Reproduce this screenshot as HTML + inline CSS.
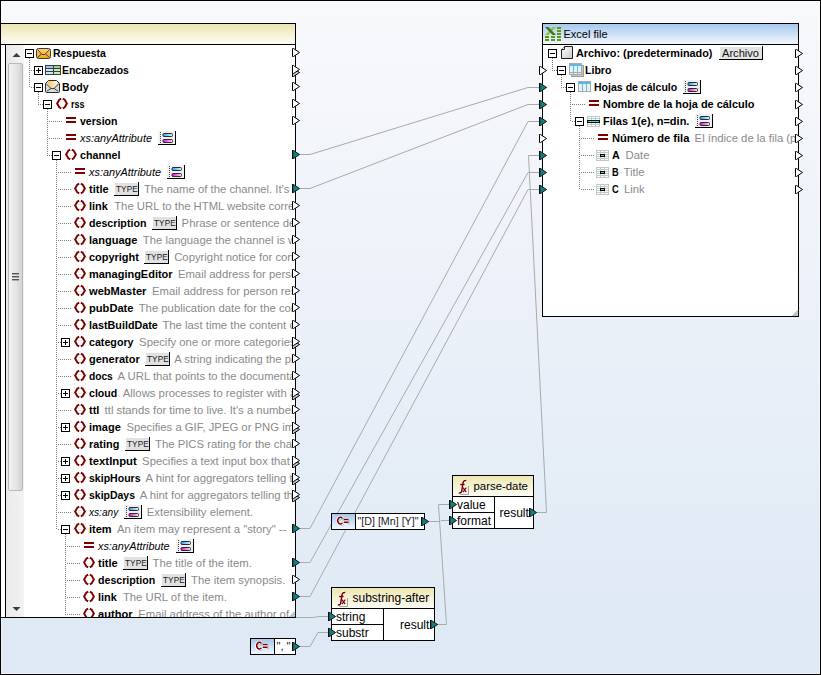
<!DOCTYPE html>
<html><head><meta charset="utf-8"><style>html,body{margin:0;padding:0;background:#fff;overflow:hidden}svg text{white-space:pre}</style></head>
<body>
<svg width="821" height="675" viewBox="0 0 821 675" font-family="Liberation Sans" style="display:block">
<defs>
<linearGradient id="gbg" x1="0" y1="0" x2="0" y2="1"><stop offset="0" stop-color="#f8f9fb"/><stop offset="0.45" stop-color="#ecf1f9"/><stop offset="1" stop-color="#dde8f4"/></linearGradient>
<linearGradient id="gyel" x1="0" y1="0" x2="0" y2="1"><stop offset="0" stop-color="#ece6b0"/><stop offset="1" stop-color="#fdfcf4"/></linearGradient>
<linearGradient id="gblue" x1="0" y1="0" x2="0" y2="1"><stop offset="0" stop-color="#a7c8ef"/><stop offset="1" stop-color="#f3f7fc"/></linearGradient>
<linearGradient id="gcbtn" x1="0" y1="0" x2="0" y2="1"><stop offset="0" stop-color="#a6c6ee"/><stop offset="1" stop-color="#f2f7fd"/></linearGradient>
<linearGradient id="gcyan" x1="0" y1="0" x2="1" y2="0"><stop offset="0" stop-color="#1aa0ff"/><stop offset="1" stop-color="#e8f6ff"/></linearGradient>
<linearGradient id="gmag" x1="0" y1="0" x2="1" y2="0"><stop offset="0" stop-color="#e000e0"/><stop offset="1" stop-color="#fbe6fb"/></linearGradient>
<linearGradient id="gorange" x1="0" y1="0" x2="0" y2="1"><stop offset="0" stop-color="#ffd07a"/><stop offset="1" stop-color="#f6a412"/></linearGradient>
<linearGradient id="gorange2" x1="0" y1="0" x2="0" y2="1"><stop offset="0" stop-color="#fbd28e"/><stop offset="1" stop-color="#fff4e0"/></linearGradient>
<linearGradient id="gscroll" x1="0" y1="0" x2="1" y2="0"><stop offset="0" stop-color="#f4f4f4"/><stop offset="0.5" stop-color="#e6e6e6"/><stop offset="1" stop-color="#d2d2d2"/></linearGradient>
<linearGradient id="gtrack" x1="0" y1="0" x2="1" y2="0"><stop offset="0" stop-color="#e9e9e9"/><stop offset="1" stop-color="#f3f3f3"/></linearGradient>
<linearGradient id="gfile" x1="0" y1="0" x2="1" y2="1"><stop offset="0" stop-color="#ffffff"/><stop offset="1" stop-color="#c9c9c9"/></linearGradient>
<linearGradient id="gorange3" x1="0" y1="0" x2="1" y2="0"><stop offset="0" stop-color="#ffc35a"/><stop offset="1" stop-color="#fff6dc"/></linearGradient>
<clipPath id="clipL"><rect x="6" y="45" width="286" height="572"/></clipPath>
</defs>
<rect x="0" y="0" width="821" height="675" fill="url(#gbg)"/>
<rect x="1" y="1" width="819" height="673" fill="none" stroke="#ffffff" stroke-width="1" opacity="0.8"/>
<rect x="0.5" y="0.5" width="820" height="674" fill="none" stroke="#000" stroke-width="1"/>
<path d="M300,154.5 L310,154.5 L528,87.5 L540,87.5" fill="none" stroke="#aaaaaa" stroke-width="1"/>
<path d="M300,188.5 L310,188.5 L528,104.5 L540,104.5" fill="none" stroke="#aaaaaa" stroke-width="1"/>
<path d="M300,528.5 L310,528.5 L528,121.5 L540,121.5" fill="none" stroke="#aaaaaa" stroke-width="1"/>
<path d="M300,562.5 L310,562.5 L528,172.5 L540,172.5" fill="none" stroke="#aaaaaa" stroke-width="1"/>
<path d="M300,596.5 L310,596.5 L528,189.5 L540,189.5" fill="none" stroke="#aaaaaa" stroke-width="1"/>
<path d="M534,512.5 L546.5,512.5 L528.5,155.5 L540,155.5" fill="none" stroke="#aaaaaa" stroke-width="1"/>
<path d="M435,624.5 L446.5,624.5 L438.5,504.5 L452,504.5" fill="none" stroke="#aaaaaa" stroke-width="1"/>
<path d="M428,521.5 L440,521.5 L441,520.5 L452,520.5" fill="none" stroke="#aaaaaa" stroke-width="1"/>
<path d="M299,646.5 L310,646.5 L318,632.5 L332,632.5" fill="none" stroke="#aaaaaa" stroke-width="1"/>
<path d="M296,617.5 L312,617.5 L320,616.5 L332,616.5" fill="none" stroke="#aaaaaa" stroke-width="1"/>
<rect x="1" y="23" width="295" height="595" fill="#000"/>
<rect x="1" y="24" width="294" height="20" fill="url(#gyel)"/>
<rect x="1" y="45" width="294" height="572" fill="#fff"/>
<rect x="5" y="45" width="1" height="572" fill="#000"/>
<rect x="6" y="45" width="18" height="572" fill="url(#gtrack)"/>
<path d="M12.5,57 L16.5,53 L20.5,57 Z" fill="#3a3a3a"/>
<path d="M12.5,607 L16.5,611 L20.5,607 Z" fill="#3a3a3a"/>
<rect x="8.5" y="63.5" width="14" height="427" rx="1.5" fill="url(#gscroll)" stroke="#b9b9b9"/>
<rect x="12" y="273" width="7" height="1.4" fill="#555"/>
<rect x="12" y="276" width="7" height="1.4" fill="#555"/>
<rect x="12" y="279" width="7" height="1.4" fill="#555"/>
<g clip-path="url(#clipL)">
<path d="M29,58h1v1h-1zM29,60h1v1h-1zM29,62h1v1h-1zM29,64h1v1h-1zM29,66h1v1h-1zM29,68h1v1h-1zM29,70h1v1h-1zM29,72h1v1h-1zM29,74h1v1h-1zM29,76h1v1h-1zM29,78h1v1h-1zM29,80h1v1h-1zM29,82h1v1h-1zM29,84h1v1h-1zM29,86h1v1h-1zM31,70h1v1h-1zM33,70h1v1h-1zM31,87h1v1h-1zM33,87h1v1h-1z" fill="#7c7c7c"/>
<path d="M38,92h1v1h-1zM38,94h1v1h-1zM38,96h1v1h-1zM38,98h1v1h-1zM38,100h1v1h-1zM38,102h1v1h-1zM38,104h1v1h-1zM40,104h1v1h-1zM42,104h1v1h-1z" fill="#7c7c7c"/>
<path d="M47,109h1v1h-1zM47,111h1v1h-1zM47,113h1v1h-1zM47,115h1v1h-1zM47,117h1v1h-1zM47,119h1v1h-1zM47,121h1v1h-1zM47,123h1v1h-1zM47,125h1v1h-1zM47,127h1v1h-1zM47,129h1v1h-1zM47,131h1v1h-1zM47,133h1v1h-1zM47,135h1v1h-1zM47,137h1v1h-1zM47,139h1v1h-1zM47,141h1v1h-1zM47,143h1v1h-1zM47,145h1v1h-1zM47,147h1v1h-1zM47,149h1v1h-1zM47,151h1v1h-1zM47,153h1v1h-1zM47,155h1v1h-1zM49,121h1v1h-1zM51,121h1v1h-1zM53,121h1v1h-1zM55,121h1v1h-1zM57,121h1v1h-1zM59,121h1v1h-1zM61,121h1v1h-1zM49,138h1v1h-1zM51,138h1v1h-1zM53,138h1v1h-1zM55,138h1v1h-1zM57,138h1v1h-1zM59,138h1v1h-1zM61,138h1v1h-1zM49,155h1v1h-1zM51,155h1v1h-1z" fill="#7c7c7c"/>
<path d="M56,160h1v1h-1zM56,162h1v1h-1zM56,164h1v1h-1zM56,166h1v1h-1zM56,168h1v1h-1zM56,170h1v1h-1zM56,172h1v1h-1zM56,174h1v1h-1zM56,176h1v1h-1zM56,178h1v1h-1zM56,180h1v1h-1zM56,182h1v1h-1zM56,184h1v1h-1zM56,186h1v1h-1zM56,188h1v1h-1zM56,190h1v1h-1zM56,192h1v1h-1zM56,194h1v1h-1zM56,196h1v1h-1zM56,198h1v1h-1zM56,200h1v1h-1zM56,202h1v1h-1zM56,204h1v1h-1zM56,206h1v1h-1zM56,208h1v1h-1zM56,210h1v1h-1zM56,212h1v1h-1zM56,214h1v1h-1zM56,216h1v1h-1zM56,218h1v1h-1zM56,220h1v1h-1zM56,222h1v1h-1zM56,224h1v1h-1zM56,226h1v1h-1zM56,228h1v1h-1zM56,230h1v1h-1zM56,232h1v1h-1zM56,234h1v1h-1zM56,236h1v1h-1zM56,238h1v1h-1zM56,240h1v1h-1zM56,242h1v1h-1zM56,244h1v1h-1zM56,246h1v1h-1zM56,248h1v1h-1zM56,250h1v1h-1zM56,252h1v1h-1zM56,254h1v1h-1zM56,256h1v1h-1zM56,258h1v1h-1zM56,260h1v1h-1zM56,262h1v1h-1zM56,264h1v1h-1zM56,266h1v1h-1zM56,268h1v1h-1zM56,270h1v1h-1zM56,272h1v1h-1zM56,274h1v1h-1zM56,276h1v1h-1zM56,278h1v1h-1zM56,280h1v1h-1zM56,282h1v1h-1zM56,284h1v1h-1zM56,286h1v1h-1zM56,288h1v1h-1zM56,290h1v1h-1zM56,292h1v1h-1zM56,294h1v1h-1zM56,296h1v1h-1zM56,298h1v1h-1zM56,300h1v1h-1zM56,302h1v1h-1zM56,304h1v1h-1zM56,306h1v1h-1zM56,308h1v1h-1zM56,310h1v1h-1zM56,312h1v1h-1zM56,314h1v1h-1zM56,316h1v1h-1zM56,318h1v1h-1zM56,320h1v1h-1zM56,322h1v1h-1zM56,324h1v1h-1zM56,326h1v1h-1zM56,328h1v1h-1zM56,330h1v1h-1zM56,332h1v1h-1zM56,334h1v1h-1zM56,336h1v1h-1zM56,338h1v1h-1zM56,340h1v1h-1zM56,342h1v1h-1zM56,344h1v1h-1zM56,346h1v1h-1zM56,348h1v1h-1zM56,350h1v1h-1zM56,352h1v1h-1zM56,354h1v1h-1zM56,356h1v1h-1zM56,358h1v1h-1zM56,360h1v1h-1zM56,362h1v1h-1zM56,364h1v1h-1zM56,366h1v1h-1zM56,368h1v1h-1zM56,370h1v1h-1zM56,372h1v1h-1zM56,374h1v1h-1zM56,376h1v1h-1zM56,378h1v1h-1zM56,380h1v1h-1zM56,382h1v1h-1zM56,384h1v1h-1zM56,386h1v1h-1zM56,388h1v1h-1zM56,390h1v1h-1zM56,392h1v1h-1zM56,394h1v1h-1zM56,396h1v1h-1zM56,398h1v1h-1zM56,400h1v1h-1zM56,402h1v1h-1zM56,404h1v1h-1zM56,406h1v1h-1zM56,408h1v1h-1zM56,410h1v1h-1zM56,412h1v1h-1zM56,414h1v1h-1zM56,416h1v1h-1zM56,418h1v1h-1zM56,420h1v1h-1zM56,422h1v1h-1zM56,424h1v1h-1zM56,426h1v1h-1zM56,428h1v1h-1zM56,430h1v1h-1zM56,432h1v1h-1zM56,434h1v1h-1zM56,436h1v1h-1zM56,438h1v1h-1zM56,440h1v1h-1zM56,442h1v1h-1zM56,444h1v1h-1zM56,446h1v1h-1zM56,448h1v1h-1zM56,450h1v1h-1zM56,452h1v1h-1zM56,454h1v1h-1zM56,456h1v1h-1zM56,458h1v1h-1zM56,460h1v1h-1zM56,462h1v1h-1zM56,464h1v1h-1zM56,466h1v1h-1zM56,468h1v1h-1zM56,470h1v1h-1zM56,472h1v1h-1zM56,474h1v1h-1zM56,476h1v1h-1zM56,478h1v1h-1zM56,480h1v1h-1zM56,482h1v1h-1zM56,484h1v1h-1zM56,486h1v1h-1zM56,488h1v1h-1zM56,490h1v1h-1zM56,492h1v1h-1zM56,494h1v1h-1zM56,496h1v1h-1zM56,498h1v1h-1zM56,500h1v1h-1zM56,502h1v1h-1zM56,504h1v1h-1zM56,506h1v1h-1zM56,508h1v1h-1zM56,510h1v1h-1zM56,512h1v1h-1zM56,514h1v1h-1zM56,516h1v1h-1zM56,518h1v1h-1zM56,520h1v1h-1zM56,522h1v1h-1zM56,524h1v1h-1zM56,526h1v1h-1zM56,528h1v1h-1zM58,172h1v1h-1zM60,172h1v1h-1zM62,172h1v1h-1zM64,172h1v1h-1zM66,172h1v1h-1zM68,172h1v1h-1zM70,172h1v1h-1zM58,189h1v1h-1zM60,189h1v1h-1zM62,189h1v1h-1zM64,189h1v1h-1zM66,189h1v1h-1zM68,189h1v1h-1zM70,189h1v1h-1zM58,206h1v1h-1zM60,206h1v1h-1zM62,206h1v1h-1zM64,206h1v1h-1zM66,206h1v1h-1zM68,206h1v1h-1zM70,206h1v1h-1zM58,223h1v1h-1zM60,223h1v1h-1zM62,223h1v1h-1zM64,223h1v1h-1zM66,223h1v1h-1zM68,223h1v1h-1zM70,223h1v1h-1zM58,240h1v1h-1zM60,240h1v1h-1zM62,240h1v1h-1zM64,240h1v1h-1zM66,240h1v1h-1zM68,240h1v1h-1zM70,240h1v1h-1zM58,257h1v1h-1zM60,257h1v1h-1zM62,257h1v1h-1zM64,257h1v1h-1zM66,257h1v1h-1zM68,257h1v1h-1zM70,257h1v1h-1zM58,274h1v1h-1zM60,274h1v1h-1zM62,274h1v1h-1zM64,274h1v1h-1zM66,274h1v1h-1zM68,274h1v1h-1zM70,274h1v1h-1zM58,291h1v1h-1zM60,291h1v1h-1zM62,291h1v1h-1zM64,291h1v1h-1zM66,291h1v1h-1zM68,291h1v1h-1zM70,291h1v1h-1zM58,308h1v1h-1zM60,308h1v1h-1zM62,308h1v1h-1zM64,308h1v1h-1zM66,308h1v1h-1zM68,308h1v1h-1zM70,308h1v1h-1zM58,325h1v1h-1zM60,325h1v1h-1zM62,325h1v1h-1zM64,325h1v1h-1zM66,325h1v1h-1zM68,325h1v1h-1zM70,325h1v1h-1zM58,342h1v1h-1zM60,342h1v1h-1zM58,359h1v1h-1zM60,359h1v1h-1zM62,359h1v1h-1zM64,359h1v1h-1zM66,359h1v1h-1zM68,359h1v1h-1zM70,359h1v1h-1zM58,376h1v1h-1zM60,376h1v1h-1zM62,376h1v1h-1zM64,376h1v1h-1zM66,376h1v1h-1zM68,376h1v1h-1zM70,376h1v1h-1zM58,393h1v1h-1zM60,393h1v1h-1zM58,410h1v1h-1zM60,410h1v1h-1zM62,410h1v1h-1zM64,410h1v1h-1zM66,410h1v1h-1zM68,410h1v1h-1zM70,410h1v1h-1zM58,427h1v1h-1zM60,427h1v1h-1zM58,444h1v1h-1zM60,444h1v1h-1zM62,444h1v1h-1zM64,444h1v1h-1zM66,444h1v1h-1zM68,444h1v1h-1zM70,444h1v1h-1zM58,461h1v1h-1zM60,461h1v1h-1zM58,478h1v1h-1zM60,478h1v1h-1zM58,495h1v1h-1zM60,495h1v1h-1zM58,512h1v1h-1zM60,512h1v1h-1zM62,512h1v1h-1zM64,512h1v1h-1zM66,512h1v1h-1zM68,512h1v1h-1zM70,512h1v1h-1zM58,529h1v1h-1zM60,529h1v1h-1z" fill="#7c7c7c"/>
<path d="M65,534h1v1h-1zM65,536h1v1h-1zM65,538h1v1h-1zM65,540h1v1h-1zM65,542h1v1h-1zM65,544h1v1h-1zM65,546h1v1h-1zM65,548h1v1h-1zM65,550h1v1h-1zM65,552h1v1h-1zM65,554h1v1h-1zM65,556h1v1h-1zM65,558h1v1h-1zM65,560h1v1h-1zM65,562h1v1h-1zM65,564h1v1h-1zM65,566h1v1h-1zM65,568h1v1h-1zM65,570h1v1h-1zM65,572h1v1h-1zM65,574h1v1h-1zM65,576h1v1h-1zM65,578h1v1h-1zM65,580h1v1h-1zM65,582h1v1h-1zM65,584h1v1h-1zM65,586h1v1h-1zM65,588h1v1h-1zM65,590h1v1h-1zM65,592h1v1h-1zM65,594h1v1h-1zM65,596h1v1h-1zM65,598h1v1h-1zM65,600h1v1h-1zM65,602h1v1h-1zM65,604h1v1h-1zM65,606h1v1h-1zM65,608h1v1h-1zM65,610h1v1h-1zM65,612h1v1h-1zM65,614h1v1h-1zM67,546h1v1h-1zM69,546h1v1h-1zM71,546h1v1h-1zM73,546h1v1h-1zM75,546h1v1h-1zM77,546h1v1h-1zM79,546h1v1h-1zM67,563h1v1h-1zM69,563h1v1h-1zM71,563h1v1h-1zM73,563h1v1h-1zM75,563h1v1h-1zM77,563h1v1h-1zM79,563h1v1h-1zM67,580h1v1h-1zM69,580h1v1h-1zM71,580h1v1h-1zM73,580h1v1h-1zM75,580h1v1h-1zM77,580h1v1h-1zM79,580h1v1h-1zM67,597h1v1h-1zM69,597h1v1h-1zM71,597h1v1h-1zM73,597h1v1h-1zM75,597h1v1h-1zM77,597h1v1h-1zM79,597h1v1h-1zM67,614h1v1h-1zM69,614h1v1h-1zM71,614h1v1h-1zM73,614h1v1h-1zM75,614h1v1h-1zM77,614h1v1h-1zM79,614h1v1h-1z" fill="#7c7c7c"/>
<rect x="25.5" y="49.5" width="8" height="8" fill="#fff" stroke="#000" stroke-width="1"/>
<rect x="27" y="53" width="5" height="1" fill="#000"/>
<rect x="36.5" y="48.5" width="14" height="10" rx="2" fill="url(#gorange)" stroke="#3c3c3c"/>
<path d="M37.5,49.5 L42,54.5 L45,54.5 L49.5,49.5 M37.5,57.5 L41.5,54 M49.5,57.5 L45.5,54" fill="none" stroke="#333" stroke-width="0.9"/>
<text x="53" y="57" font-size="11" font-weight="bold" textLength="52.9" lengthAdjust="spacingAndGlyphs">Respuesta</text>
<rect x="34.5" y="66.5" width="8" height="8" fill="#fff" stroke="#000" stroke-width="1"/>
<rect x="36" y="70" width="5" height="1" fill="#000"/>
<rect x="38" y="68" width="1" height="5" fill="#000"/>
<rect x="45" y="65" width="16" height="10" fill="#3c3c3c"/>
<rect x="46" y="66" width="7" height="2" fill="#9ec5f0"/>
<rect x="54" y="66" width="6" height="2" fill="#93d293"/>
<rect x="46" y="69" width="7" height="2" fill="#cde6fc"/>
<rect x="54" y="69" width="6" height="2" fill="#c3edbb"/>
<rect x="46" y="72" width="7" height="2" fill="#cde6fc"/>
<rect x="54" y="72" width="6" height="2" fill="#c3edbb"/>
<text x="62" y="74" font-size="11" font-weight="bold" textLength="66.9" lengthAdjust="spacingAndGlyphs">Encabezados</text>
<rect x="34.5" y="83.5" width="8" height="8" fill="#fff" stroke="#000" stroke-width="1"/>
<rect x="36" y="87" width="5" height="1" fill="#000"/>
<path d="M48.5,80.5 H56.5 L59.5,83.5 V91.5 Q59.5,92.5 58.5,92.5 H46.5 Q45.5,92.5 45.5,91.5 V83.5 Z" fill="#dadada" stroke="#2a2a2a"/>
<path d="M48,81 H57 V83.5 L53.8,87.8 H51.2 L48,83.5 Z" fill="url(#gorange3)"/>
<path d="M46.2,83.8 L51,88.5 H54 L58.8,83.8 M46.8,91.2 L51,88.5 M58.2,91.2 L54,88.5" fill="none" stroke="#333" stroke-width="0.9"/>
<text x="62" y="91" font-size="11" font-weight="bold" textLength="26.6" lengthAdjust="spacingAndGlyphs">Body</text>
<rect x="43.5" y="100.5" width="8" height="8" fill="#fff" stroke="#000" stroke-width="1"/>
<rect x="45" y="104" width="5" height="1" fill="#000"/>
<path d="M61.2,98.7 L59.3,99.7 L57.1,103.5 L59.3,107.3 L61.2,108.3" fill="none" stroke="#7d0000" stroke-width="1.9"/>
<path d="M62.8,98.7 L64.7,99.7 L66.9,103.5 L64.7,107.3 L62.8,108.3" fill="none" stroke="#7d0000" stroke-width="1.9"/>
<text x="71" y="108" font-size="11" font-weight="bold" textLength="13.6" lengthAdjust="spacingAndGlyphs">rss</text>
<rect x="66" y="117" width="10" height="2" fill="#7d0000"/>
<rect x="66" y="121" width="10" height="2" fill="#7d0000"/>
<text x="80" y="125" font-size="11" font-weight="bold" textLength="37.5" lengthAdjust="spacingAndGlyphs">version</text>
<rect x="66" y="134" width="10" height="2" fill="#7d0000"/>
<rect x="66" y="138" width="10" height="2" fill="#7d0000"/>
<text x="80" y="142" font-size="11" font-style="italic" textLength="72.0" lengthAdjust="spacingAndGlyphs">xs:anyAttribute</text>
<rect x="158" y="131" width="17" height="13" fill="#f0f0f0"/>
<rect x="158" y="144" width="18" height="1" fill="#000"/>
<rect x="175" y="131" width="1" height="14" fill="#000"/>
<line x1="160.5" y1="132" x2="160.5" y2="143" stroke="#444" stroke-dasharray="1 1"/>
<rect x="163" y="133.5" width="9.5" height="3" rx="1" fill="url(#gcyan)" stroke="#2a2a2a"/>
<rect x="163" y="139.5" width="9.5" height="3" rx="1" fill="url(#gmag)" stroke="#2a2a2a"/>
<rect x="52.5" y="151.5" width="8" height="8" fill="#fff" stroke="#000" stroke-width="1"/>
<rect x="54" y="155" width="5" height="1" fill="#000"/>
<path d="M70.2,149.7 L68.3,150.7 L66.1,154.5 L68.3,158.3 L70.2,159.3" fill="none" stroke="#7d0000" stroke-width="1.9"/>
<path d="M71.8,149.7 L73.7,150.7 L75.9,154.5 L73.7,158.3 L71.8,159.3" fill="none" stroke="#7d0000" stroke-width="1.9"/>
<text x="80" y="159" font-size="11" font-weight="bold" textLength="40.4" lengthAdjust="spacingAndGlyphs">channel</text>
<rect x="75" y="168" width="10" height="2" fill="#7d0000"/>
<rect x="75" y="172" width="10" height="2" fill="#7d0000"/>
<text x="89" y="176" font-size="11" font-style="italic" textLength="72.0" lengthAdjust="spacingAndGlyphs">xs:anyAttribute</text>
<rect x="167" y="165" width="17" height="13" fill="#f0f0f0"/>
<rect x="167" y="178" width="18" height="1" fill="#000"/>
<rect x="184" y="165" width="1" height="14" fill="#000"/>
<line x1="169.5" y1="166" x2="169.5" y2="177" stroke="#444" stroke-dasharray="1 1"/>
<rect x="172" y="167.5" width="9.5" height="3" rx="1" fill="url(#gcyan)" stroke="#2a2a2a"/>
<rect x="172" y="173.5" width="9.5" height="3" rx="1" fill="url(#gmag)" stroke="#2a2a2a"/>
<path d="M79.2,183.7 L77.3,184.7 L75.1,188.5 L77.3,192.3 L79.2,193.3" fill="none" stroke="#7d0000" stroke-width="1.9"/>
<path d="M80.8,183.7 L82.7,184.7 L84.9,188.5 L82.7,192.3 L80.8,193.3" fill="none" stroke="#7d0000" stroke-width="1.9"/>
<text x="89" y="193" font-size="11" font-weight="bold" textLength="19.6" lengthAdjust="spacingAndGlyphs">title</text>
<rect x="115" y="183" width="23" height="12" fill="#e1e1e1"/>
<rect x="114" y="195" width="25" height="1" fill="#000"/>
<rect x="138" y="182" width="1" height="14" fill="#000"/>
<text x="116" y="192" font-size="8.2" fill="#1a1a1a" letter-spacing="0.1">TYPE</text>
<text x="143.9" y="193" font-size="11" fill="#8a8a8a" textLength="261.8" lengthAdjust="spacingAndGlyphs">The name of the channel. It's a very long description</text>
<path d="M79.2,200.7 L77.3,201.7 L75.1,205.5 L77.3,209.3 L79.2,210.3" fill="none" stroke="#7d0000" stroke-width="1.9"/>
<path d="M80.8,200.7 L82.7,201.7 L84.9,205.5 L82.7,209.3 L80.8,210.3" fill="none" stroke="#7d0000" stroke-width="1.9"/>
<text x="89" y="210" font-size="11" font-weight="bold" textLength="18.9" lengthAdjust="spacingAndGlyphs">link</text>
<text x="114.19999999999999" y="210" font-size="11" fill="#8a8a8a" textLength="226.1" lengthAdjust="spacingAndGlyphs">The URL to the HTML website corresponding</text>
<path d="M79.2,217.7 L77.3,218.7 L75.1,222.5 L77.3,226.3 L79.2,227.3" fill="none" stroke="#7d0000" stroke-width="1.9"/>
<path d="M80.8,217.7 L82.7,218.7 L84.9,222.5 L82.7,226.3 L80.8,227.3" fill="none" stroke="#7d0000" stroke-width="1.9"/>
<text x="89" y="227" font-size="11" font-weight="bold" textLength="57.4" lengthAdjust="spacingAndGlyphs">description</text>
<rect x="153" y="217" width="23" height="12" fill="#e1e1e1"/>
<rect x="152" y="229" width="25" height="1" fill="#000"/>
<rect x="176" y="216" width="1" height="14" fill="#000"/>
<text x="154" y="226" font-size="8.2" fill="#1a1a1a" letter-spacing="0.1">TYPE</text>
<text x="181.6" y="227" font-size="11" fill="#8a8a8a" textLength="152.7" lengthAdjust="spacingAndGlyphs">Phrase or sentence describing</text>
<path d="M79.2,234.7 L77.3,235.7 L75.1,239.5 L77.3,243.3 L79.2,244.3" fill="none" stroke="#7d0000" stroke-width="1.9"/>
<path d="M80.8,234.7 L82.7,235.7 L84.9,239.5 L82.7,243.3 L80.8,244.3" fill="none" stroke="#7d0000" stroke-width="1.9"/>
<text x="89" y="244" font-size="11" font-weight="bold" textLength="48.5" lengthAdjust="spacingAndGlyphs">language</text>
<text x="142.79999999999998" y="244" font-size="11" fill="#8a8a8a" textLength="190.5" lengthAdjust="spacingAndGlyphs">The language the channel is written in</text>
<path d="M79.2,251.7 L77.3,252.7 L75.1,256.5 L77.3,260.3 L79.2,261.3" fill="none" stroke="#7d0000" stroke-width="1.9"/>
<path d="M80.8,251.7 L82.7,252.7 L84.9,256.5 L82.7,260.3 L80.8,261.3" fill="none" stroke="#7d0000" stroke-width="1.9"/>
<text x="89" y="261" font-size="11" font-weight="bold" textLength="49.9" lengthAdjust="spacingAndGlyphs">copyright</text>
<rect x="145" y="251" width="23" height="12" fill="#e1e1e1"/>
<rect x="144" y="263" width="25" height="1" fill="#000"/>
<rect x="168" y="250" width="1" height="14" fill="#000"/>
<text x="146" y="260" font-size="8.2" fill="#1a1a1a" letter-spacing="0.1">TYPE</text>
<text x="174.2" y="261" font-size="11" fill="#8a8a8a" textLength="138.3" lengthAdjust="spacingAndGlyphs">Copyright notice for content</text>
<path d="M79.2,268.7 L77.3,269.7 L75.1,273.5 L77.3,277.3 L79.2,278.3" fill="none" stroke="#7d0000" stroke-width="1.9"/>
<path d="M80.8,268.7 L82.7,269.7 L84.9,273.5 L82.7,277.3 L80.8,278.3" fill="none" stroke="#7d0000" stroke-width="1.9"/>
<text x="89" y="278" font-size="11" font-weight="bold" textLength="83.6" lengthAdjust="spacingAndGlyphs">managingEditor</text>
<text x="177.9" y="278" font-size="11" fill="#8a8a8a" textLength="186.7" lengthAdjust="spacingAndGlyphs">Email address for person responsible</text>
<path d="M79.2,285.7 L77.3,286.7 L75.1,290.5 L77.3,294.3 L79.2,295.3" fill="none" stroke="#7d0000" stroke-width="1.9"/>
<path d="M80.8,285.7 L82.7,286.7 L84.9,290.5 L82.7,294.3 L80.8,295.3" fill="none" stroke="#7d0000" stroke-width="1.9"/>
<text x="89" y="295" font-size="11" font-weight="bold" textLength="57.4" lengthAdjust="spacingAndGlyphs">webMaster</text>
<text x="152.0" y="295" font-size="11" fill="#8a8a8a" textLength="186.7" lengthAdjust="spacingAndGlyphs">Email address for person responsible</text>
<path d="M79.2,302.7 L77.3,303.7 L75.1,307.5 L77.3,311.3 L79.2,312.3" fill="none" stroke="#7d0000" stroke-width="1.9"/>
<path d="M80.8,302.7 L82.7,303.7 L84.9,307.5 L82.7,311.3 L80.8,312.3" fill="none" stroke="#7d0000" stroke-width="1.9"/>
<text x="89" y="312" font-size="11" font-weight="bold" textLength="44.5" lengthAdjust="spacingAndGlyphs">pubDate</text>
<text x="138.7" y="312" font-size="11" fill="#8a8a8a" textLength="177.3" lengthAdjust="spacingAndGlyphs">The publication date for the content</text>
<path d="M79.2,319.7 L77.3,320.7 L75.1,324.5 L77.3,328.3 L79.2,329.3" fill="none" stroke="#7d0000" stroke-width="1.9"/>
<path d="M80.8,319.7 L82.7,320.7 L84.9,324.5 L82.7,328.3 L80.8,329.3" fill="none" stroke="#7d0000" stroke-width="1.9"/>
<text x="89" y="329" font-size="11" font-weight="bold" textLength="68.8" lengthAdjust="spacingAndGlyphs">lastBuildDate</text>
<text x="162.4" y="329" font-size="11" fill="#8a8a8a" textLength="170.4" lengthAdjust="spacingAndGlyphs">The last time the content changed</text>
<rect x="61.5" y="338.5" width="8" height="8" fill="#fff" stroke="#000" stroke-width="1"/>
<rect x="63" y="342" width="5" height="1" fill="#000"/>
<rect x="65" y="340" width="1" height="5" fill="#000"/>
<path d="M79.2,336.7 L77.3,337.7 L75.1,341.5 L77.3,345.3 L79.2,346.3" fill="none" stroke="#7d0000" stroke-width="1.9"/>
<path d="M80.8,336.7 L82.7,337.7 L84.9,341.5 L82.7,345.3 L80.8,346.3" fill="none" stroke="#7d0000" stroke-width="1.9"/>
<text x="89" y="346" font-size="11" font-weight="bold" textLength="44.5" lengthAdjust="spacingAndGlyphs">category</text>
<text x="139.1" y="346" font-size="11" fill="#8a8a8a" textLength="156.5" lengthAdjust="spacingAndGlyphs">Specify one or more categories</text>
<path d="M79.2,353.7 L77.3,354.7 L75.1,358.5 L77.3,362.3 L79.2,363.3" fill="none" stroke="#7d0000" stroke-width="1.9"/>
<path d="M80.8,353.7 L82.7,354.7 L84.9,358.5 L82.7,362.3 L80.8,363.3" fill="none" stroke="#7d0000" stroke-width="1.9"/>
<text x="89" y="363" font-size="11" font-weight="bold" textLength="50.7" lengthAdjust="spacingAndGlyphs">generator</text>
<rect x="146" y="353" width="23" height="12" fill="#e1e1e1"/>
<rect x="145" y="365" width="25" height="1" fill="#000"/>
<rect x="169" y="352" width="1" height="14" fill="#000"/>
<text x="147" y="362" font-size="8.2" fill="#1a1a1a" letter-spacing="0.1">TYPE</text>
<text x="174.2" y="363" font-size="11" fill="#8a8a8a" textLength="152.7" lengthAdjust="spacingAndGlyphs">A string indicating the program</text>
<path d="M79.2,370.7 L77.3,371.7 L75.1,375.5 L77.3,379.3 L79.2,380.3" fill="none" stroke="#7d0000" stroke-width="1.9"/>
<path d="M80.8,370.7 L82.7,371.7 L84.9,375.5 L82.7,379.3 L80.8,380.3" fill="none" stroke="#7d0000" stroke-width="1.9"/>
<text x="89" y="380" font-size="11" font-weight="bold" textLength="23.8" lengthAdjust="spacingAndGlyphs">docs</text>
<text x="117.5" y="380" font-size="11" fill="#8a8a8a" textLength="196.3" lengthAdjust="spacingAndGlyphs">A URL that points to the documentation</text>
<rect x="61.5" y="389.5" width="8" height="8" fill="#fff" stroke="#000" stroke-width="1"/>
<rect x="63" y="393" width="5" height="1" fill="#000"/>
<rect x="65" y="391" width="1" height="5" fill="#000"/>
<path d="M79.2,387.7 L77.3,388.7 L75.1,392.5 L77.3,396.3 L79.2,397.3" fill="none" stroke="#7d0000" stroke-width="1.9"/>
<path d="M80.8,387.7 L82.7,388.7 L84.9,392.5 L82.7,396.3 L80.8,397.3" fill="none" stroke="#7d0000" stroke-width="1.9"/>
<text x="89" y="397" font-size="11" font-weight="bold" textLength="28.2" lengthAdjust="spacingAndGlyphs">cloud</text>
<text x="122.8" y="397" font-size="11" fill="#8a8a8a" textLength="203.6" lengthAdjust="spacingAndGlyphs">Allows processes to register with a cloud</text>
<path d="M79.2,404.7 L77.3,405.7 L75.1,409.5 L77.3,413.3 L79.2,414.3" fill="none" stroke="#7d0000" stroke-width="1.9"/>
<path d="M80.8,404.7 L82.7,405.7 L84.9,409.5 L82.7,413.3 L80.8,414.3" fill="none" stroke="#7d0000" stroke-width="1.9"/>
<text x="89" y="414" font-size="11" font-weight="bold" textLength="10.4" lengthAdjust="spacingAndGlyphs">ttl</text>
<text x="104.6" y="414" font-size="11" fill="#8a8a8a" textLength="190.1" lengthAdjust="spacingAndGlyphs">ttl stands for time to live. It's a number</text>
<rect x="61.5" y="423.5" width="8" height="8" fill="#fff" stroke="#000" stroke-width="1"/>
<rect x="63" y="427" width="5" height="1" fill="#000"/>
<rect x="65" y="425" width="1" height="5" fill="#000"/>
<path d="M79.2,421.7 L77.3,422.7 L75.1,426.5 L77.3,430.3 L79.2,431.3" fill="none" stroke="#7d0000" stroke-width="1.9"/>
<path d="M80.8,421.7 L82.7,422.7 L84.9,426.5 L82.7,430.3 L80.8,431.3" fill="none" stroke="#7d0000" stroke-width="1.9"/>
<text x="89" y="431" font-size="11" font-weight="bold" textLength="31.8" lengthAdjust="spacingAndGlyphs">image</text>
<text x="126.39999999999999" y="431" font-size="11" fill="#8a8a8a" textLength="186.6" lengthAdjust="spacingAndGlyphs">Specifies a GIF, JPEG or PNG image</text>
<path d="M79.2,438.7 L77.3,439.7 L75.1,443.5 L77.3,447.3 L79.2,448.3" fill="none" stroke="#7d0000" stroke-width="1.9"/>
<path d="M80.8,438.7 L82.7,439.7 L84.9,443.5 L82.7,447.3 L80.8,448.3" fill="none" stroke="#7d0000" stroke-width="1.9"/>
<text x="89" y="448" font-size="11" font-weight="bold" textLength="30.3" lengthAdjust="spacingAndGlyphs">rating</text>
<rect x="126" y="438" width="23" height="12" fill="#e1e1e1"/>
<rect x="125" y="450" width="25" height="1" fill="#000"/>
<rect x="149" y="437" width="1" height="14" fill="#000"/>
<text x="127" y="447" font-size="8.2" fill="#1a1a1a" letter-spacing="0.1">TYPE</text>
<text x="155.0" y="448" font-size="11" fill="#8a8a8a" textLength="158.4" lengthAdjust="spacingAndGlyphs">The PICS rating for the channel</text>
<rect x="61.5" y="457.5" width="8" height="8" fill="#fff" stroke="#000" stroke-width="1"/>
<rect x="63" y="461" width="5" height="1" fill="#000"/>
<rect x="65" y="459" width="1" height="5" fill="#000"/>
<path d="M79.2,455.7 L77.3,456.7 L75.1,460.5 L77.3,464.3 L79.2,465.3" fill="none" stroke="#7d0000" stroke-width="1.9"/>
<path d="M80.8,455.7 L82.7,456.7 L84.9,460.5 L82.7,464.3 L80.8,465.3" fill="none" stroke="#7d0000" stroke-width="1.9"/>
<text x="89" y="465" font-size="11" font-weight="bold" textLength="47.8" lengthAdjust="spacingAndGlyphs">textInput</text>
<text x="142.1" y="465" font-size="11" fill="#8a8a8a" textLength="147.7" lengthAdjust="spacingAndGlyphs">Specifies a text input box that</text>
<rect x="61.5" y="474.5" width="8" height="8" fill="#fff" stroke="#000" stroke-width="1"/>
<rect x="63" y="478" width="5" height="1" fill="#000"/>
<rect x="65" y="476" width="1" height="5" fill="#000"/>
<path d="M79.2,472.7 L77.3,473.7 L75.1,477.5 L77.3,481.3 L79.2,482.3" fill="none" stroke="#7d0000" stroke-width="1.9"/>
<path d="M80.8,472.7 L82.7,473.7 L84.9,477.5 L82.7,481.3 L80.8,482.3" fill="none" stroke="#7d0000" stroke-width="1.9"/>
<text x="89" y="482" font-size="11" font-weight="bold" textLength="51.6" lengthAdjust="spacingAndGlyphs">skipHours</text>
<text x="145.6" y="482" font-size="11" fill="#8a8a8a" textLength="169.1" lengthAdjust="spacingAndGlyphs">A hint for aggregators telling them</text>
<rect x="61.5" y="491.5" width="8" height="8" fill="#fff" stroke="#000" stroke-width="1"/>
<rect x="63" y="495" width="5" height="1" fill="#000"/>
<rect x="65" y="493" width="1" height="5" fill="#000"/>
<path d="M79.2,489.7 L77.3,490.7 L75.1,494.5 L77.3,498.3 L79.2,499.3" fill="none" stroke="#7d0000" stroke-width="1.9"/>
<path d="M80.8,489.7 L82.7,490.7 L84.9,494.5 L82.7,498.3 L80.8,499.3" fill="none" stroke="#7d0000" stroke-width="1.9"/>
<text x="89" y="499" font-size="11" font-weight="bold" textLength="46.0" lengthAdjust="spacingAndGlyphs">skipDays</text>
<text x="139.7" y="499" font-size="11" fill="#8a8a8a" textLength="169.1" lengthAdjust="spacingAndGlyphs">A hint for aggregators telling them</text>
<path d="M79.2,506.7 L77.3,507.7 L75.1,511.5 L77.3,515.3 L79.2,516.3" fill="none" stroke="#7d0000" stroke-width="1.9"/>
<path d="M80.8,506.7 L82.7,507.7 L84.9,511.5 L82.7,515.3 L80.8,516.3" fill="none" stroke="#7d0000" stroke-width="1.9"/>
<text x="89" y="516" font-size="11" font-style="italic" textLength="29.2" lengthAdjust="spacingAndGlyphs">xs:any</text>
<rect x="124" y="505" width="17" height="13" fill="#f0f0f0"/>
<rect x="124" y="518" width="18" height="1" fill="#000"/>
<rect x="141" y="505" width="1" height="14" fill="#000"/>
<line x1="126.5" y1="506" x2="126.5" y2="517" stroke="#444" stroke-dasharray="1 1"/>
<rect x="129" y="507.5" width="9.5" height="3" rx="1" fill="url(#gcyan)" stroke="#2a2a2a"/>
<rect x="129" y="513.5" width="9.5" height="3" rx="1" fill="url(#gmag)" stroke="#2a2a2a"/>
<text x="146.79999999999998" y="516" font-size="11" fill="#8a8a8a" textLength="106.2" lengthAdjust="spacingAndGlyphs">Extensibility element.</text>
<rect x="61.5" y="525.5" width="8" height="8" fill="#fff" stroke="#000" stroke-width="1"/>
<rect x="63" y="529" width="5" height="1" fill="#000"/>
<path d="M79.2,523.7 L77.3,524.7 L75.1,528.5 L77.3,532.3 L79.2,533.3" fill="none" stroke="#7d0000" stroke-width="1.9"/>
<path d="M80.8,523.7 L82.7,524.7 L84.9,528.5 L82.7,532.3 L80.8,533.3" fill="none" stroke="#7d0000" stroke-width="1.9"/>
<text x="89" y="533" font-size="11" font-weight="bold" textLength="22.6" lengthAdjust="spacingAndGlyphs">item</text>
<text x="116.89999999999999" y="533" font-size="11" fill="#8a8a8a" textLength="175.8" lengthAdjust="spacingAndGlyphs">An item may represent a "story" --  </text>
<rect x="84" y="542" width="10" height="2" fill="#7d0000"/>
<rect x="84" y="546" width="10" height="2" fill="#7d0000"/>
<text x="98" y="550" font-size="11" font-style="italic" textLength="71.6" lengthAdjust="spacingAndGlyphs">xs:anyAttribute</text>
<rect x="176" y="539" width="17" height="13" fill="#f0f0f0"/>
<rect x="176" y="552" width="18" height="1" fill="#000"/>
<rect x="193" y="539" width="1" height="14" fill="#000"/>
<line x1="178.5" y1="540" x2="178.5" y2="551" stroke="#444" stroke-dasharray="1 1"/>
<rect x="181" y="541.5" width="9.5" height="3" rx="1" fill="url(#gcyan)" stroke="#2a2a2a"/>
<rect x="181" y="547.5" width="9.5" height="3" rx="1" fill="url(#gmag)" stroke="#2a2a2a"/>
<path d="M88.2,557.7 L86.3,558.7 L84.1,562.5 L86.3,566.3 L88.2,567.3" fill="none" stroke="#7d0000" stroke-width="1.9"/>
<path d="M89.8,557.7 L91.7,558.7 L93.9,562.5 L91.7,566.3 L89.8,567.3" fill="none" stroke="#7d0000" stroke-width="1.9"/>
<text x="98" y="567" font-size="11" font-weight="bold" textLength="19.8" lengthAdjust="spacingAndGlyphs">title</text>
<rect x="124" y="557" width="23" height="12" fill="#e1e1e1"/>
<rect x="123" y="569" width="25" height="1" fill="#000"/>
<rect x="147" y="556" width="1" height="14" fill="#000"/>
<text x="125" y="566" font-size="8.2" fill="#1a1a1a" letter-spacing="0.1">TYPE</text>
<text x="152.5" y="567" font-size="11" fill="#8a8a8a" textLength="99.3" lengthAdjust="spacingAndGlyphs">The title of the item.</text>
<path d="M88.2,574.7 L86.3,575.7 L84.1,579.5 L86.3,583.3 L88.2,584.3" fill="none" stroke="#7d0000" stroke-width="1.9"/>
<path d="M89.8,574.7 L91.7,575.7 L93.9,579.5 L91.7,583.3 L89.8,584.3" fill="none" stroke="#7d0000" stroke-width="1.9"/>
<text x="98" y="584" font-size="11" font-weight="bold" textLength="57.2" lengthAdjust="spacingAndGlyphs">description</text>
<rect x="162" y="574" width="23" height="12" fill="#e1e1e1"/>
<rect x="161" y="586" width="25" height="1" fill="#000"/>
<rect x="185" y="573" width="1" height="14" fill="#000"/>
<text x="163" y="583" font-size="8.2" fill="#1a1a1a" letter-spacing="0.1">TYPE</text>
<text x="191.1" y="584" font-size="11" fill="#8a8a8a" textLength="94.3" lengthAdjust="spacingAndGlyphs">The item synopsis.</text>
<path d="M88.2,591.7 L86.3,592.7 L84.1,596.5 L86.3,600.3 L88.2,601.3" fill="none" stroke="#7d0000" stroke-width="1.9"/>
<path d="M89.8,591.7 L91.7,592.7 L93.9,596.5 L91.7,600.3 L89.8,601.3" fill="none" stroke="#7d0000" stroke-width="1.9"/>
<text x="98" y="601" font-size="11" font-weight="bold" textLength="18.8" lengthAdjust="spacingAndGlyphs">link</text>
<text x="122.89999999999999" y="601" font-size="11" fill="#8a8a8a" textLength="103.9" lengthAdjust="spacingAndGlyphs">The URL of the item.</text>
<path d="M88.2,608.7 L86.3,609.7 L84.1,613.5 L86.3,617.3 L88.2,618.3" fill="none" stroke="#7d0000" stroke-width="1.9"/>
<path d="M89.8,608.7 L91.7,609.7 L93.9,613.5 L91.7,617.3 L89.8,618.3" fill="none" stroke="#7d0000" stroke-width="1.9"/>
<text x="98" y="618" font-size="11" font-weight="bold" textLength="34.5" lengthAdjust="spacingAndGlyphs">author</text>
<text x="138.2" y="618" font-size="11" fill="#8a8a8a" textLength="194.2" lengthAdjust="spacingAndGlyphs">Email address of the author of the item</text>
</g>
<rect x="295" y="44" width="1" height="574" fill="#000"/>
<path d="M292.5,48.5 L293.5,48.5 L299.5,52.5 L293.5,56.5 L292.5,56.5 Z" fill="#fff" stroke="#000" stroke-width="1"/>
<path d="M292.5,68.5 L293.5,68.5 L299.5,72.5 L293.5,76.5 L292.5,76.5 Z" fill="#c4c4c4" stroke="#000" stroke-width="1"/>
<path d="M292.5,65.5 L293.5,65.5 L299.5,69.5 L293.5,73.5 L292.5,73.5 Z" fill="#fff" stroke="#000" stroke-width="1"/>
<rect x="292" y="65" width="1" height="12" fill="#000"/>
<path d="M292.5,82.5 L293.5,82.5 L299.5,86.5 L293.5,90.5 L292.5,90.5 Z" fill="#fff" stroke="#000" stroke-width="1"/>
<path d="M292.5,99.5 L293.5,99.5 L299.5,103.5 L293.5,107.5 L292.5,107.5 Z" fill="#fff" stroke="#000" stroke-width="1"/>
<path d="M292.5,116.5 L293.5,116.5 L299.5,120.5 L293.5,124.5 L292.5,124.5 Z" fill="#fff" stroke="#000" stroke-width="1"/>
<path d="M292.5,150.5 L293.5,150.5 L299.6,154.5 L293.5,158.5 L292.5,158.5 Z" fill="#0e8080" stroke="#0a0a0a" stroke-width="0.9"/>
<rect x="292" y="150" width="1.3" height="9" fill="#0a0a0a"/>
<path d="M292.5,184.5 L293.5,184.5 L299.6,188.5 L293.5,192.5 L292.5,192.5 Z" fill="#0e8080" stroke="#0a0a0a" stroke-width="0.9"/>
<rect x="292" y="184" width="1.3" height="9" fill="#0a0a0a"/>
<path d="M292.5,201.5 L293.5,201.5 L299.5,205.5 L293.5,209.5 L292.5,209.5 Z" fill="#fff" stroke="#000" stroke-width="1"/>
<path d="M292.5,218.5 L293.5,218.5 L299.5,222.5 L293.5,226.5 L292.5,226.5 Z" fill="#fff" stroke="#000" stroke-width="1"/>
<path d="M292.5,235.5 L293.5,235.5 L299.5,239.5 L293.5,243.5 L292.5,243.5 Z" fill="#fff" stroke="#000" stroke-width="1"/>
<path d="M292.5,252.5 L293.5,252.5 L299.5,256.5 L293.5,260.5 L292.5,260.5 Z" fill="#fff" stroke="#000" stroke-width="1"/>
<path d="M292.5,269.5 L293.5,269.5 L299.5,273.5 L293.5,277.5 L292.5,277.5 Z" fill="#fff" stroke="#000" stroke-width="1"/>
<path d="M292.5,286.5 L293.5,286.5 L299.5,290.5 L293.5,294.5 L292.5,294.5 Z" fill="#fff" stroke="#000" stroke-width="1"/>
<path d="M292.5,303.5 L293.5,303.5 L299.5,307.5 L293.5,311.5 L292.5,311.5 Z" fill="#fff" stroke="#000" stroke-width="1"/>
<path d="M292.5,320.5 L293.5,320.5 L299.5,324.5 L293.5,328.5 L292.5,328.5 Z" fill="#fff" stroke="#000" stroke-width="1"/>
<path d="M292.5,340.5 L293.5,340.5 L299.5,344.5 L293.5,348.5 L292.5,348.5 Z" fill="#c4c4c4" stroke="#000" stroke-width="1"/>
<path d="M292.5,337.5 L293.5,337.5 L299.5,341.5 L293.5,345.5 L292.5,345.5 Z" fill="#fff" stroke="#000" stroke-width="1"/>
<rect x="292" y="337" width="1" height="12" fill="#000"/>
<path d="M292.5,354.5 L293.5,354.5 L299.5,358.5 L293.5,362.5 L292.5,362.5 Z" fill="#fff" stroke="#000" stroke-width="1"/>
<path d="M292.5,371.5 L293.5,371.5 L299.5,375.5 L293.5,379.5 L292.5,379.5 Z" fill="#fff" stroke="#000" stroke-width="1"/>
<path d="M292.5,391.5 L293.5,391.5 L299.5,395.5 L293.5,399.5 L292.5,399.5 Z" fill="#c4c4c4" stroke="#000" stroke-width="1"/>
<path d="M292.5,388.5 L293.5,388.5 L299.5,392.5 L293.5,396.5 L292.5,396.5 Z" fill="#fff" stroke="#000" stroke-width="1"/>
<rect x="292" y="388" width="1" height="12" fill="#000"/>
<path d="M292.5,405.5 L293.5,405.5 L299.5,409.5 L293.5,413.5 L292.5,413.5 Z" fill="#fff" stroke="#000" stroke-width="1"/>
<path d="M292.5,425.5 L293.5,425.5 L299.5,429.5 L293.5,433.5 L292.5,433.5 Z" fill="#c4c4c4" stroke="#000" stroke-width="1"/>
<path d="M292.5,422.5 L293.5,422.5 L299.5,426.5 L293.5,430.5 L292.5,430.5 Z" fill="#fff" stroke="#000" stroke-width="1"/>
<rect x="292" y="422" width="1" height="12" fill="#000"/>
<path d="M292.5,439.5 L293.5,439.5 L299.5,443.5 L293.5,447.5 L292.5,447.5 Z" fill="#fff" stroke="#000" stroke-width="1"/>
<path d="M292.5,459.5 L293.5,459.5 L299.5,463.5 L293.5,467.5 L292.5,467.5 Z" fill="#c4c4c4" stroke="#000" stroke-width="1"/>
<path d="M292.5,456.5 L293.5,456.5 L299.5,460.5 L293.5,464.5 L292.5,464.5 Z" fill="#fff" stroke="#000" stroke-width="1"/>
<rect x="292" y="456" width="1" height="12" fill="#000"/>
<path d="M292.5,476.5 L293.5,476.5 L299.5,480.5 L293.5,484.5 L292.5,484.5 Z" fill="#c4c4c4" stroke="#000" stroke-width="1"/>
<path d="M292.5,473.5 L293.5,473.5 L299.5,477.5 L293.5,481.5 L292.5,481.5 Z" fill="#fff" stroke="#000" stroke-width="1"/>
<rect x="292" y="473" width="1" height="12" fill="#000"/>
<path d="M292.5,493.5 L293.5,493.5 L299.5,497.5 L293.5,501.5 L292.5,501.5 Z" fill="#c4c4c4" stroke="#000" stroke-width="1"/>
<path d="M292.5,490.5 L293.5,490.5 L299.5,494.5 L293.5,498.5 L292.5,498.5 Z" fill="#fff" stroke="#000" stroke-width="1"/>
<rect x="292" y="490" width="1" height="12" fill="#000"/>
<path d="M292.5,524.5 L293.5,524.5 L299.6,528.5 L293.5,532.5 L292.5,532.5 Z" fill="#0e8080" stroke="#0a0a0a" stroke-width="0.9"/>
<rect x="292" y="524" width="1.3" height="9" fill="#0a0a0a"/>
<path d="M292.5,558.5 L293.5,558.5 L299.6,562.5 L293.5,566.5 L292.5,566.5 Z" fill="#0e8080" stroke="#0a0a0a" stroke-width="0.9"/>
<rect x="292" y="558" width="1.3" height="9" fill="#0a0a0a"/>
<path d="M292.5,575.5 L293.5,575.5 L299.5,579.5 L293.5,583.5 L292.5,583.5 Z" fill="#fff" stroke="#000" stroke-width="1"/>
<path d="M292.5,592.5 L293.5,592.5 L299.6,596.5 L293.5,600.5 L292.5,600.5 Z" fill="#0e8080" stroke="#0a0a0a" stroke-width="0.9"/>
<rect x="292" y="592" width="1.3" height="9" fill="#0a0a0a"/>
<path d="M289,617 L295,611 V617 Z" fill="#e8e8e8"/><path d="M289.5,617 L295,611.5 M291.5,617 L295,613.5 M293.5,617 L295,615.5" stroke="#888" stroke-width="0.8"/>
<rect x="542" y="23" width="257" height="294" fill="#000"/>
<rect x="543" y="24" width="255" height="20" fill="url(#gblue)"/>
<rect x="543" y="45" width="255" height="271" fill="#fff"/>
<path d="M552.5,27 L556,27 L548.5,35 L545,35 Z" fill="#8cc63f"/>
<path d="M545,27 L548.5,27 L556,35 L552.5,35 Z" fill="#3f7a10"/>
<rect x="557" y="27" width="4" height="2" fill="#5a9a12"/>
<rect x="557" y="30" width="4" height="2" fill="#5a9a12"/>
<rect x="557" y="33" width="4" height="2" fill="#5a9a12"/>
<rect x="557" y="36" width="4" height="2" fill="#5a9a12"/>
<rect x="557" y="39" width="4" height="2" fill="#5a9a12"/>
<rect x="545" y="36" width="4" height="2" fill="#5a9a12"/>
<rect x="545" y="39" width="4" height="2" fill="#5a9a12"/>
<rect x="551" y="36" width="4" height="2" fill="#5a9a12"/>
<rect x="551" y="39" width="4" height="2" fill="#5a9a12"/>
<text x="563.5" y="38" font-size="11" font-weight="normal" font-style="normal" fill="#000" >Excel file</text>
<clipPath id="clipR"><rect x="543" y="45" width="255" height="271"/></clipPath>
<g clip-path="url(#clipR)">
<path d="M552,58h1v1h-1zM552,60h1v1h-1zM552,62h1v1h-1zM552,64h1v1h-1zM552,66h1v1h-1zM552,68h1v1h-1zM552,70h1v1h-1zM554,70h1v1h-1zM556,70h1v1h-1zM561,75h1v1h-1zM561,77h1v1h-1zM561,79h1v1h-1zM561,81h1v1h-1zM561,83h1v1h-1zM561,85h1v1h-1zM561,87h1v1h-1zM563,87h1v1h-1zM565,87h1v1h-1zM570,92h1v1h-1zM570,94h1v1h-1zM570,96h1v1h-1zM570,98h1v1h-1zM570,100h1v1h-1zM570,102h1v1h-1zM570,104h1v1h-1zM570,106h1v1h-1zM570,108h1v1h-1zM570,110h1v1h-1zM570,112h1v1h-1zM570,114h1v1h-1zM570,116h1v1h-1zM570,118h1v1h-1zM570,120h1v1h-1zM572,104h1v1h-1zM574,104h1v1h-1zM576,104h1v1h-1zM578,104h1v1h-1zM580,104h1v1h-1zM582,104h1v1h-1zM584,104h1v1h-1zM572,121h1v1h-1zM574,121h1v1h-1zM579,126h1v1h-1zM579,128h1v1h-1zM579,130h1v1h-1zM579,132h1v1h-1zM579,134h1v1h-1zM579,136h1v1h-1zM579,138h1v1h-1zM579,140h1v1h-1zM579,142h1v1h-1zM579,144h1v1h-1zM579,146h1v1h-1zM579,148h1v1h-1zM579,150h1v1h-1zM579,152h1v1h-1zM579,154h1v1h-1zM579,156h1v1h-1zM579,158h1v1h-1zM579,160h1v1h-1zM579,162h1v1h-1zM579,164h1v1h-1zM579,166h1v1h-1zM579,168h1v1h-1zM579,170h1v1h-1zM579,172h1v1h-1zM579,174h1v1h-1zM579,176h1v1h-1zM579,178h1v1h-1zM579,180h1v1h-1zM579,182h1v1h-1zM579,184h1v1h-1zM579,186h1v1h-1zM579,188h1v1h-1zM581,138h1v1h-1zM583,138h1v1h-1zM585,138h1v1h-1zM587,138h1v1h-1zM589,138h1v1h-1zM591,138h1v1h-1zM593,138h1v1h-1zM581,155h1v1h-1zM583,155h1v1h-1zM585,155h1v1h-1zM587,155h1v1h-1zM589,155h1v1h-1zM591,155h1v1h-1zM593,155h1v1h-1zM581,172h1v1h-1zM583,172h1v1h-1zM585,172h1v1h-1zM587,172h1v1h-1zM589,172h1v1h-1zM591,172h1v1h-1zM593,172h1v1h-1zM581,189h1v1h-1zM583,189h1v1h-1zM585,189h1v1h-1zM587,189h1v1h-1zM589,189h1v1h-1zM591,189h1v1h-1zM593,189h1v1h-1z" fill="#7c7c7c"/>
<rect x="548.5" y="49.5" width="8" height="8" fill="#fff" stroke="#000" stroke-width="1"/>
<rect x="550" y="53" width="5" height="1" fill="#000"/>
<path d="M564.5,46.5 H572.5 V58.5 H561.5 V49.5 Z" fill="url(#gfile)" stroke="#1e1e1e"/>
<path d="M561.5,49.5 H564.5 V46.5" fill="#fff" stroke="#1e1e1e"/>
<text x="576" y="57" font-size="11" font-weight="bold" textLength="136.5" lengthAdjust="spacingAndGlyphs">Archivo: (predeterminado)</text>
<rect x="720" y="47" width="42" height="12" fill="#e3e3e3"/>
<rect x="719" y="59" width="44" height="1" fill="#000"/>
<rect x="762" y="46" width="1" height="14" fill="#000"/>
<text x="722" y="57" font-size="11" fill="#111" textLength="37" lengthAdjust="spacingAndGlyphs">Archivo</text>
<rect x="557.5" y="66.5" width="8" height="8" fill="#fff" stroke="#000" stroke-width="1"/>
<rect x="559" y="70" width="5" height="1" fill="#000"/>
<rect x="571.5" y="65.5" width="12" height="11" fill="#c8c8c8" stroke="#9a9a9a"/>
<rect x="569.5" y="63.5" width="12" height="11" fill="#d9f6ff" stroke="#a9a9a9"/>
<rect x="570" y="64" width="11" height="2" fill="#5ab8f0"/>
<path d="M573.5,66 V74 M577.5,66 V74 M570,72.5 H581" stroke="#a9a9a9" stroke-width="1"/>
<text x="585" y="74" font-size="11" font-weight="bold" textLength="26.4" lengthAdjust="spacingAndGlyphs">Libro</text>
<rect x="566.5" y="83.5" width="8" height="8" fill="#fff" stroke="#000" stroke-width="1"/>
<rect x="568" y="87" width="5" height="1" fill="#000"/>
<rect x="578.5" y="81.5" width="12" height="10" fill="#d9f6ff" stroke="#a9a9a9"/>
<rect x="579" y="82" width="11" height="2" fill="#5ab8f0"/>
<path d="M582.5,84 V91 M586.5,84 V91" stroke="#a9a9a9" stroke-width="1"/>
<text x="594" y="91" font-size="11" font-weight="bold" textLength="83.2" lengthAdjust="spacingAndGlyphs">Hojas de cálculo</text>
<rect x="683" y="80" width="17" height="13" fill="#f0f0f0"/>
<rect x="683" y="93" width="18" height="1" fill="#000"/>
<rect x="700" y="80" width="1" height="14" fill="#000"/>
<line x1="685.5" y1="81" x2="685.5" y2="92" stroke="#444" stroke-dasharray="1 1"/>
<rect x="688" y="82.5" width="9.5" height="3" rx="1" fill="url(#gcyan)" stroke="#2a2a2a"/>
<rect x="688" y="88.5" width="9.5" height="3" rx="1" fill="url(#gmag)" stroke="#2a2a2a"/>
<rect x="589" y="100" width="10" height="2" fill="#7d0000"/>
<rect x="589" y="104" width="10" height="2" fill="#7d0000"/>
<text x="603" y="108" font-size="11" font-weight="bold" textLength="151.4" lengthAdjust="spacingAndGlyphs">Nombre de la hoja de cálculo</text>
<rect x="575.5" y="117.5" width="8" height="8" fill="#fff" stroke="#000" stroke-width="1"/>
<rect x="577" y="121" width="5" height="1" fill="#000"/>
<rect x="587" y="116" width="13" height="11" fill="#c6c6c6"/>
<rect x="588" y="117" width="3" height="1" fill="#fff"/>
<rect x="588" y="119" width="3" height="1" fill="#fff"/>
<rect x="588" y="123" width="3" height="1" fill="#fff"/>
<rect x="588" y="125" width="3" height="1" fill="#fff"/>
<rect x="592" y="117" width="3" height="1" fill="#fff"/>
<rect x="592" y="119" width="3" height="1" fill="#fff"/>
<rect x="592" y="123" width="3" height="1" fill="#fff"/>
<rect x="592" y="125" width="3" height="1" fill="#fff"/>
<rect x="596" y="117" width="3" height="1" fill="#fff"/>
<rect x="596" y="119" width="3" height="1" fill="#fff"/>
<rect x="596" y="123" width="3" height="1" fill="#fff"/>
<rect x="596" y="125" width="3" height="1" fill="#fff"/>
<rect x="587" y="120" width="13" height="3" fill="#0a0a0a"/>
<rect x="588" y="121" width="3" height="1" fill="#2ee6ee"/>
<rect x="592" y="121" width="3" height="1" fill="#2ee6ee"/>
<rect x="596" y="121" width="3" height="1" fill="#2ee6ee"/>
<rect x="591" y="121" width="1" height="1" fill="#7fb8bb"/>
<rect x="595" y="121" width="1" height="1" fill="#7fb8bb"/>
<text x="603" y="125" font-size="11" font-weight="bold" textLength="86.4" lengthAdjust="spacingAndGlyphs">Filas 1(e), n=din.</text>
<rect x="695" y="114" width="17" height="13" fill="#f0f0f0"/>
<rect x="695" y="127" width="18" height="1" fill="#000"/>
<rect x="712" y="114" width="1" height="14" fill="#000"/>
<line x1="697.5" y1="115" x2="697.5" y2="126" stroke="#444" stroke-dasharray="1 1"/>
<rect x="700" y="116.5" width="9.5" height="3" rx="1" fill="url(#gcyan)" stroke="#2a2a2a"/>
<rect x="700" y="122.5" width="9.5" height="3" rx="1" fill="url(#gmag)" stroke="#2a2a2a"/>
<rect x="598" y="134" width="10" height="2" fill="#7d0000"/>
<rect x="598" y="138" width="10" height="2" fill="#7d0000"/>
<text x="612" y="142" font-size="11" font-weight="bold" textLength="77.4" lengthAdjust="spacingAndGlyphs">Número de fila</text>
<text x="694.6" y="142" font-size="11" fill="#8a8a8a" textLength="178.5" lengthAdjust="spacingAndGlyphs">El índice de la fila (predeterminado)</text>
<rect x="596" y="150" width="13" height="11" fill="#c6c6c6"/>
<rect x="597" y="151" width="3" height="1" fill="#fff"/>
<rect x="597" y="153" width="3" height="1" fill="#fff"/>
<rect x="597" y="155" width="3" height="1" fill="#fff"/>
<rect x="597" y="157" width="3" height="1" fill="#fff"/>
<rect x="597" y="159" width="3" height="1" fill="#fff"/>
<rect x="601" y="151" width="3" height="1" fill="#fff"/>
<rect x="601" y="153" width="3" height="1" fill="#fff"/>
<rect x="601" y="155" width="3" height="1" fill="#fff"/>
<rect x="601" y="157" width="3" height="1" fill="#fff"/>
<rect x="601" y="159" width="3" height="1" fill="#fff"/>
<rect x="605" y="151" width="3" height="1" fill="#fff"/>
<rect x="605" y="153" width="3" height="1" fill="#fff"/>
<rect x="605" y="155" width="3" height="1" fill="#fff"/>
<rect x="605" y="157" width="3" height="1" fill="#fff"/>
<rect x="605" y="159" width="3" height="1" fill="#fff"/>
<rect x="600" y="154" width="5" height="3" fill="#0a0a0a"/>
<rect x="601" y="155" width="3" height="1" fill="#2ee6ee"/>
<text x="612" y="159" font-size="11" font-weight="bold" textLength="7.8" lengthAdjust="spacingAndGlyphs">A</text>
<text x="625.6" y="159" font-size="11" fill="#8a8a8a" textLength="23.9" lengthAdjust="spacingAndGlyphs">Date</text>
<rect x="596" y="167" width="13" height="11" fill="#c6c6c6"/>
<rect x="597" y="168" width="3" height="1" fill="#fff"/>
<rect x="597" y="170" width="3" height="1" fill="#fff"/>
<rect x="597" y="172" width="3" height="1" fill="#fff"/>
<rect x="597" y="174" width="3" height="1" fill="#fff"/>
<rect x="597" y="176" width="3" height="1" fill="#fff"/>
<rect x="601" y="168" width="3" height="1" fill="#fff"/>
<rect x="601" y="170" width="3" height="1" fill="#fff"/>
<rect x="601" y="172" width="3" height="1" fill="#fff"/>
<rect x="601" y="174" width="3" height="1" fill="#fff"/>
<rect x="601" y="176" width="3" height="1" fill="#fff"/>
<rect x="605" y="168" width="3" height="1" fill="#fff"/>
<rect x="605" y="170" width="3" height="1" fill="#fff"/>
<rect x="605" y="172" width="3" height="1" fill="#fff"/>
<rect x="605" y="174" width="3" height="1" fill="#fff"/>
<rect x="605" y="176" width="3" height="1" fill="#fff"/>
<rect x="600" y="171" width="5" height="3" fill="#0a0a0a"/>
<rect x="601" y="172" width="3" height="1" fill="#2ee6ee"/>
<text x="612" y="176" font-size="11" font-weight="bold" textLength="6.7" lengthAdjust="spacingAndGlyphs">B</text>
<text x="623.6" y="176" font-size="11" fill="#8a8a8a" textLength="20.9" lengthAdjust="spacingAndGlyphs">Title</text>
<rect x="596" y="184" width="13" height="11" fill="#c6c6c6"/>
<rect x="597" y="185" width="3" height="1" fill="#fff"/>
<rect x="597" y="187" width="3" height="1" fill="#fff"/>
<rect x="597" y="189" width="3" height="1" fill="#fff"/>
<rect x="597" y="191" width="3" height="1" fill="#fff"/>
<rect x="597" y="193" width="3" height="1" fill="#fff"/>
<rect x="601" y="185" width="3" height="1" fill="#fff"/>
<rect x="601" y="187" width="3" height="1" fill="#fff"/>
<rect x="601" y="189" width="3" height="1" fill="#fff"/>
<rect x="601" y="191" width="3" height="1" fill="#fff"/>
<rect x="601" y="193" width="3" height="1" fill="#fff"/>
<rect x="605" y="185" width="3" height="1" fill="#fff"/>
<rect x="605" y="187" width="3" height="1" fill="#fff"/>
<rect x="605" y="189" width="3" height="1" fill="#fff"/>
<rect x="605" y="191" width="3" height="1" fill="#fff"/>
<rect x="605" y="193" width="3" height="1" fill="#fff"/>
<rect x="600" y="188" width="5" height="3" fill="#0a0a0a"/>
<rect x="601" y="189" width="3" height="1" fill="#2ee6ee"/>
<text x="612" y="193" font-size="11" font-weight="bold" textLength="6.7" lengthAdjust="spacingAndGlyphs">C</text>
<text x="623.9" y="193" font-size="11" fill="#8a8a8a" textLength="20.7" lengthAdjust="spacingAndGlyphs">Link</text>
</g>
<rect x="798" y="44" width="1" height="273" fill="#000"/>
<path d="M792,316 L798,310 V316 Z" fill="#e8e8e8"/><path d="M792.5,316 L798,310.5 M794.5,316 L798,312.5 M796.5,316 L798,314.5" stroke="#888" stroke-width="0.8"/>
<path d="M795.5,49.5 L796.5,49.5 L802.5,53.5 L796.5,57.5 L795.5,57.5 Z" fill="#fff" stroke="#000" stroke-width="1"/>
<path d="M795.5,66.5 L796.5,66.5 L802.5,70.5 L796.5,74.5 L795.5,74.5 Z" fill="#fff" stroke="#000" stroke-width="1"/>
<path d="M795.5,83.5 L796.5,83.5 L802.5,87.5 L796.5,91.5 L795.5,91.5 Z" fill="#fff" stroke="#000" stroke-width="1"/>
<path d="M795.5,100.5 L796.5,100.5 L802.5,104.5 L796.5,108.5 L795.5,108.5 Z" fill="#fff" stroke="#000" stroke-width="1"/>
<path d="M795.5,117.5 L796.5,117.5 L802.5,121.5 L796.5,125.5 L795.5,125.5 Z" fill="#fff" stroke="#000" stroke-width="1"/>
<path d="M795.5,134.5 L796.5,134.5 L802.5,138.5 L796.5,142.5 L795.5,142.5 Z" fill="#fff" stroke="#000" stroke-width="1"/>
<path d="M795.5,151.5 L796.5,151.5 L802.5,155.5 L796.5,159.5 L795.5,159.5 Z" fill="#fff" stroke="#000" stroke-width="1"/>
<path d="M795.5,168.5 L796.5,168.5 L802.5,172.5 L796.5,176.5 L795.5,176.5 Z" fill="#fff" stroke="#000" stroke-width="1"/>
<path d="M795.5,185.5 L796.5,185.5 L802.5,189.5 L796.5,193.5 L795.5,193.5 Z" fill="#fff" stroke="#000" stroke-width="1"/>
<path d="M539.5,66.5 L540.5,66.5 L546.5,70.5 L540.5,74.5 L539.5,74.5 Z" fill="#fff" stroke="#000" stroke-width="1"/>
<path d="M539.5,83.5 L540.5,83.5 L546.6,87.5 L540.5,91.5 L539.5,91.5 Z" fill="#0e8080" stroke="#0a0a0a" stroke-width="0.9"/>
<rect x="539" y="83" width="1.3" height="9" fill="#0a0a0a"/>
<path d="M539.5,100.5 L540.5,100.5 L546.6,104.5 L540.5,108.5 L539.5,108.5 Z" fill="#0e8080" stroke="#0a0a0a" stroke-width="0.9"/>
<rect x="539" y="100" width="1.3" height="9" fill="#0a0a0a"/>
<path d="M539.5,117.5 L540.5,117.5 L546.6,121.5 L540.5,125.5 L539.5,125.5 Z" fill="#0e8080" stroke="#0a0a0a" stroke-width="0.9"/>
<rect x="539" y="117" width="1.3" height="9" fill="#0a0a0a"/>
<path d="M539.5,134.5 L540.5,134.5 L546.5,138.5 L540.5,142.5 L539.5,142.5 Z" fill="#fff" stroke="#000" stroke-width="1"/>
<path d="M539.5,151.5 L540.5,151.5 L546.6,155.5 L540.5,159.5 L539.5,159.5 Z" fill="#0e8080" stroke="#0a0a0a" stroke-width="0.9"/>
<rect x="539" y="151" width="1.3" height="9" fill="#0a0a0a"/>
<path d="M539.5,168.5 L540.5,168.5 L546.6,172.5 L540.5,176.5 L539.5,176.5 Z" fill="#0e8080" stroke="#0a0a0a" stroke-width="0.9"/>
<rect x="539" y="168" width="1.3" height="9" fill="#0a0a0a"/>
<path d="M539.5,185.5 L540.5,185.5 L546.6,189.5 L540.5,193.5 L539.5,193.5 Z" fill="#0e8080" stroke="#0a0a0a" stroke-width="0.9"/>
<rect x="539" y="185" width="1.3" height="9" fill="#0a0a0a"/>
<rect x="452" y="475" width="82" height="54" fill="#000"/>
<rect x="453" y="476" width="80" height="20" fill="url(#gyel)"/>
<rect x="453" y="497" width="80" height="31" fill="#fff"/>
<rect x="494" y="496" width="1" height="32" fill="#000"/>
<rect x="452" y="512" width="42" height="1" fill="#000"/>
<path d="M460,494.5 H468.5 V486" fill="none" stroke="#a0a0a0" stroke-width="1"/>
<path d="M466.3,480.6 Q463.6,480 463,483 L461.6,491.6 Q461.2,493.2 458.8,492.8 M460.2,484.5 H464.6" fill="none" stroke="#ffffff" stroke-width="3.2" stroke-linecap="butt"/>
<path d="M463,487.6 L466.2,492.2 M466.2,487.6 L463,492.2" fill="none" stroke="#ffffff" stroke-width="2.5600000000000005"/>
<path d="M466.3,480.6 Q463.6,480 463,483 L461.6,491.6 Q461.2,493.2 458.8,492.8 M460.2,484.5 H464.6" fill="none" stroke="#7d0000" stroke-width="1.5" stroke-linecap="butt"/>
<path d="M463,487.6 L466.2,492.2 M466.2,487.6 L463,492.2" fill="none" stroke="#7d0000" stroke-width="1.2000000000000002"/>
<text x="473.5" y="489.6" font-size="11.4" font-weight="normal" font-style="normal" fill="#000" >parse-date</text>
<text x="457" y="508.5" font-size="12" font-weight="normal" font-style="normal" fill="#000" >value</text>
<path d="M449.5,500.5 L450.5,500.5 L456.6,504.5 L450.5,508.5 L449.5,508.5 Z" fill="#0e8080" stroke="#0a0a0a" stroke-width="0.9"/>
<rect x="449" y="500" width="1.3" height="9" fill="#0a0a0a"/>
<text x="457" y="524.5" font-size="12" font-weight="normal" font-style="normal" fill="#000" >format</text>
<path d="M449.5,516.5 L450.5,516.5 L456.6,520.5 L450.5,524.5 L449.5,524.5 Z" fill="#0e8080" stroke="#0a0a0a" stroke-width="0.9"/>
<rect x="449" y="516" width="1.3" height="9" fill="#0a0a0a"/>
<text x="499.5" y="516.5" font-size="12" font-weight="normal" font-style="normal" fill="#000" >result</text>
<path d="M529.5,508.5 L530.5,508.5 L536.6,512.5 L530.5,516.5 L529.5,516.5 Z" fill="#0e8080" stroke="#0a0a0a" stroke-width="0.9"/>
<rect x="529" y="508" width="1.3" height="9" fill="#0a0a0a"/>
<rect x="331" y="587" width="104" height="54" fill="#000"/>
<rect x="332" y="588" width="102" height="20" fill="url(#gyel)"/>
<rect x="332" y="609" width="102" height="31" fill="#fff"/>
<rect x="383" y="608" width="1" height="32" fill="#000"/>
<rect x="331" y="624" width="52" height="1" fill="#000"/>
<path d="M339,606.5 H347.5 V598" fill="none" stroke="#a0a0a0" stroke-width="1"/>
<path d="M345.3,592.6 Q342.6,592 342,595 L340.6,603.6 Q340.2,605.2 337.8,604.8 M339.2,596.5 H343.6" fill="none" stroke="#ffffff" stroke-width="3.2" stroke-linecap="butt"/>
<path d="M342,599.6 L345.2,604.2 M345.2,599.6 L342,604.2" fill="none" stroke="#ffffff" stroke-width="2.5600000000000005"/>
<path d="M345.3,592.6 Q342.6,592 342,595 L340.6,603.6 Q340.2,605.2 337.8,604.8 M339.2,596.5 H343.6" fill="none" stroke="#7d0000" stroke-width="1.5" stroke-linecap="butt"/>
<path d="M342,599.6 L345.2,604.2 M345.2,599.6 L342,604.2" fill="none" stroke="#7d0000" stroke-width="1.2000000000000002"/>
<text x="352.5" y="601.6" font-size="12" font-weight="normal" font-style="normal" fill="#000" >substring-after</text>
<text x="336" y="620.5" font-size="12" font-weight="normal" font-style="normal" fill="#000" >string</text>
<path d="M328.5,612.5 L329.5,612.5 L335.6,616.5 L329.5,620.5 L328.5,620.5 Z" fill="#0e8080" stroke="#0a0a0a" stroke-width="0.9"/>
<rect x="328" y="612" width="1.3" height="9" fill="#0a0a0a"/>
<text x="336" y="636.5" font-size="12" font-weight="normal" font-style="normal" fill="#000" >substr</text>
<path d="M328.5,628.5 L329.5,628.5 L335.6,632.5 L329.5,636.5 L328.5,636.5 Z" fill="#0e8080" stroke="#0a0a0a" stroke-width="0.9"/>
<rect x="328" y="628" width="1.3" height="9" fill="#0a0a0a"/>
<text x="400" y="628.5" font-size="12" font-weight="normal" font-style="normal" fill="#000" >result</text>
<path d="M430.5,620.5 L431.5,620.5 L437.6,624.5 L431.5,628.5 L430.5,628.5 Z" fill="#0e8080" stroke="#0a0a0a" stroke-width="0.9"/>
<rect x="430" y="620" width="1.3" height="9" fill="#0a0a0a"/>
<rect x="331" y="513" width="94" height="17" fill="#000"/>
<rect x="332" y="514" width="23" height="15" fill="url(#gcbtn)"/>
<rect x="356" y="514" width="68" height="15" fill="#fff"/>
<path d="M343.3,519.2 A2.7,3.3 0 1 0 343.3,524 M344.8,520.6 H349.5 M344.8,523.2 H349.5" fill="none" stroke="#a0a0a0" stroke-width="1.5"/>
<path d="M342.3,518.2 A2.7,3.3 0 1 0 342.3,523 M343.8,519.6 H348.5 M343.8,522.2 H348.5" fill="none" stroke="#ffffff" stroke-width="3.2"/>
<path d="M342.3,518.2 A2.7,3.3 0 1 0 342.3,523 M343.8,519.6 H348.5 M343.8,522.2 H348.5" fill="none" stroke="#7d0000" stroke-width="1.5"/>
<text x="357.5" y="525" font-size="11" fill="#1a1a2a" textLength="61" lengthAdjust="spacingAndGlyphs">"[D] [Mn] [Y]"</text>
<path d="M421.5,517.5 L422.5,517.5 L428.6,521.5 L422.5,525.5 L421.5,525.5 Z" fill="#0e8080" stroke="#0a0a0a" stroke-width="0.9"/>
<rect x="421" y="517" width="1.3" height="9" fill="#0a0a0a"/>
<rect x="250" y="638" width="46" height="17" fill="#000"/>
<rect x="251" y="639" width="23" height="15" fill="url(#gcbtn)"/>
<rect x="275" y="639" width="20" height="15" fill="#fff"/>
<path d="M262.3,644.2 A2.7,3.3 0 1 0 262.3,649 M263.8,645.6 H268.5 M263.8,648.2 H268.5" fill="none" stroke="#a0a0a0" stroke-width="1.5"/>
<path d="M261.3,643.2 A2.7,3.3 0 1 0 261.3,648 M262.8,644.6 H267.5 M262.8,647.2 H267.5" fill="none" stroke="#ffffff" stroke-width="3.2"/>
<path d="M261.3,643.2 A2.7,3.3 0 1 0 261.3,648 M262.8,644.6 H267.5 M262.8,647.2 H267.5" fill="none" stroke="#7d0000" stroke-width="1.5"/>
<text x="276.5" y="650" font-size="11" fill="#1a1a2a" textLength="14" lengthAdjust="spacingAndGlyphs">", "</text>
<path d="M292.5,642.5 L293.5,642.5 L299.6,646.5 L293.5,650.5 L292.5,650.5 Z" fill="#0e8080" stroke="#0a0a0a" stroke-width="0.9"/>
<rect x="292" y="642" width="1.3" height="9" fill="#0a0a0a"/>
</svg>

</body></html>
